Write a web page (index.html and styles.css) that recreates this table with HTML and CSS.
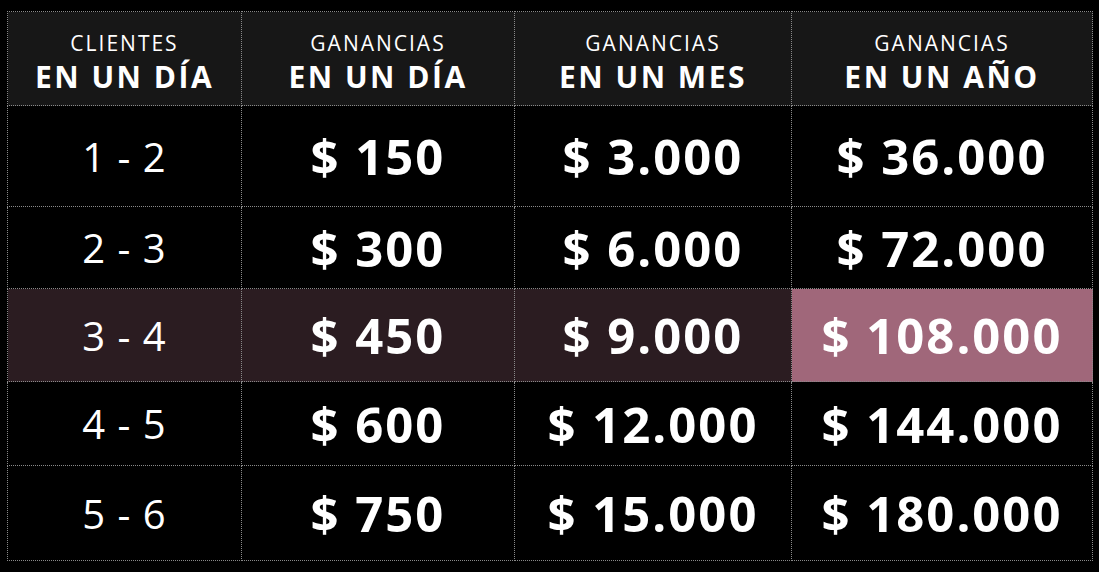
FILE: index.html
```html
<!DOCTYPE html>
<html lang="es">
<head>
<meta charset="utf-8">
<title>Ganancias</title>
<link rel="stylesheet" href="styles.css">
</head>
<body>
<table class="earnings">
  <colgroup>
    <col class="c1"><col class="c2"><col class="c3"><col class="c4">
  </colgroup>
  <thead>
    <tr>
      <th><span class="sub">CLIENTES</span><span class="main">EN UN DÍA</span></th>
      <th><span class="sub">GANANCIAS</span><span class="main">EN UN DÍA</span></th>
      <th><span class="sub">GANANCIAS</span><span class="main">EN UN MES</span></th>
      <th><span class="sub">GANANCIAS</span><span class="main">EN UN AÑO</span></th>
    </tr>
  </thead>
  <tbody>
    <tr class="r1"><td class="range">1 - 2</td><td>$ 150</td><td>$ 3.000</td><td>$ 36.000</td></tr>
    <tr class="r2"><td class="range">2 - 3</td><td>$ 300</td><td>$ 6.000</td><td>$ 72.000</td></tr>
    <tr class="r3 hl"><td class="range">3 - 4</td><td>$ 450</td><td>$ 9.000</td><td class="best">$ 108.000</td></tr>
    <tr class="r4"><td class="range">4 - 5</td><td>$ 600</td><td>$ 12.000</td><td>$ 144.000</td></tr>
    <tr class="r5"><td class="range">5 - 6</td><td>$ 750</td><td>$ 15.000</td><td>$ 180.000</td></tr>
  </tbody>
</table>
</body>
</html>
```
FILE: styles.css
```css
html, body {
  margin: 0;
  padding: 0;
  background: #000;
}
body {
  padding: 11px 0 0 7px;
  font-family: "Open Sans", "Liberation Sans", sans-serif;
  color: #fff;
}
.earnings {
  border-collapse: collapse;
  table-layout: fixed;
  width: 1085px;
}
.c1 { width: 234px; }
.c2 { width: 273px; }
.c3 { width: 277px; }
.c4 { width: 301px; }
.earnings th,
.earnings td {
  border: 1px dotted #8a8a8a;
  text-align: center;
  vertical-align: middle;
  padding: 0;
}
.earnings thead th {
  background: #171717;
  height: 94px;
  padding-top: 6px;
  box-sizing: border-box;
}
.sub {
  display: block;
  font-size: 21px;
  font-weight: 400;
  line-height: 30px;
  letter-spacing: 2px;
}
.main {
  display: block;
  font-size: 30px;
  font-weight: 700;
  line-height: 38px;
  letter-spacing: 2.5px;
}
.earnings td {
  font-size: 49px;
  font-weight: 700;
  letter-spacing: 2px;
}
.earnings td.range {
  font-weight: 400;
  font-size: 40px;
  letter-spacing: 1px;
}
.r1 td { height: 100px; }
.r2 td { height: 81px; }
.r3 td { height: 92px; }
.r4 td { height: 83px; }
.r5 td { height: 94px; }
.hl td { background: #2b1c21; }
.hl td.best { background: #a0677a; }
```
